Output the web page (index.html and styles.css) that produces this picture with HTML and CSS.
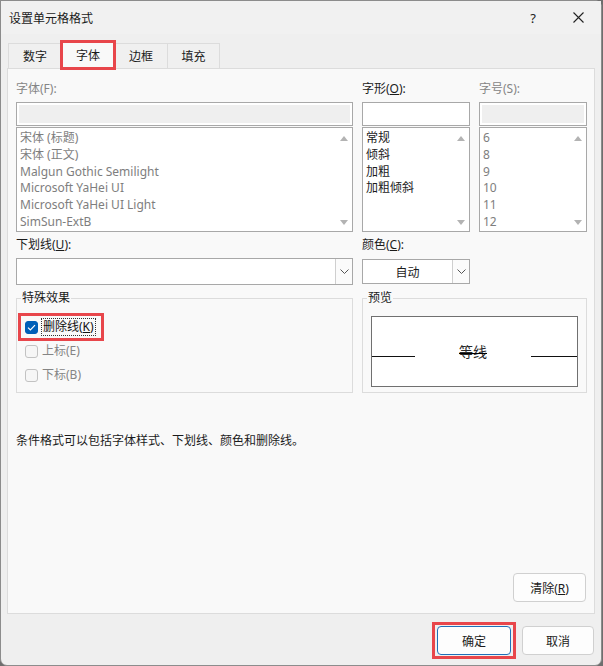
FILE: index.html
```html
<!DOCTYPE html>
<html lang="zh-CN">
<head>
<meta charset="utf-8">
<title>设置单元格格式</title>
<link rel="stylesheet" href="styles.css">
</head>
<body>
<div class="window">
  <div class="titlebar">
    <span class="title">设置单元格格式</span>
    <span class="help">?</span>
    <span class="close"><svg width="11" height="11" viewBox="0 0 11 11"><path d="M0.5 0.5L10.5 10.5M10.5 0.5L0.5 10.5" stroke="#222" stroke-width="1.1" fill="none"/></svg></span>
  </div>
  <div class="tabs">
    <div class="tab first">数字</div>
    <div class="tab active">字体</div>
    <div class="tab">边框</div>
    <div class="tab last">填充</div>
  </div>
  <div class="panel">
    <div class="grid">
      <div class="field">
        <div class="lbl dis">字体(F):</div>
        <div class="inp grayed"></div>
        <div class="list">
          <div class="items dis">
            <div>宋体 (标题)</div>
            <div>宋体 (正文)</div>
            <div>Malgun Gothic Semilight</div>
            <div>Microsoft YaHei UI</div>
            <div>Microsoft YaHei UI Light</div>
            <div>SimSun-ExtB</div>
          </div>
          <div class="sb"><span class="up"></span><span class="down"></span></div>
        </div>
      </div>
      <div class="field">
        <div class="lbl">字形(<u>O</u>):</div>
        <div class="inp"></div>
        <div class="list">
          <div class="items">
            <div>常规</div>
            <div>倾斜</div>
            <div>加粗</div>
            <div>加粗倾斜</div>
          </div>
          <div class="sb"><span class="up"></span><span class="down"></span></div>
        </div>
      </div>
      <div class="field">
        <div class="lbl dis">字号(S):</div>
        <div class="inp grayed"></div>
        <div class="list">
          <div class="items dis">
            <div>6</div>
            <div>8</div>
            <div>9</div>
            <div>10</div>
            <div>11</div>
            <div>12</div>
          </div>
          <div class="sb"><span class="up"></span><span class="down"></span></div>
        </div>
      </div>

      <div class="field">
        <div class="lbl">下划线(<u>U</u>):</div>
        <div class="dd">
          <span class="dd-val"></span>
          <span class="dd-btn"><svg width="9" height="5" viewBox="0 0 9 5"><path d="M0.5 0.5L4.5 4.5L8.5 0.5" stroke="#555" stroke-width="1" fill="none"/></svg></span>
        </div>
      </div>
      <div class="field">
        <div class="lbl">颜色(<u>C</u>):</div>
        <div class="dd small">
          <span class="dd-val center">自动</span>
          <span class="dd-btn"><svg width="9" height="5" viewBox="0 0 9 5"><path d="M0.5 0.5L4.5 4.5L8.5 0.5" stroke="#555" stroke-width="1" fill="none"/></svg></span>
        </div>
      </div>
      <div></div>

      <fieldset class="group effects">
        <legend>特殊效果</legend>
        <div class="row marked">
          <span class="cb on"><svg width="9" height="7" viewBox="0 0 9 7"><path d="M1 3.6L3.4 6L8 1.2" stroke="#fff" stroke-width="1.2" fill="none"/></svg></span>
          <span class="cb-label focus">删除线(<u>K</u>)</span>
        </div>
        <div class="row">
          <span class="cb"></span>
          <span class="cb-label dis">上标(E)</span>
        </div>
        <div class="row">
          <span class="cb"></span>
          <span class="cb-label dis">下标(B)</span>
        </div>
      </fieldset>
      <fieldset class="group preview">
        <legend>预览</legend>
        <div class="pv">
          <span class="pv-line left"></span>
          <span class="pv-text"><span class="strike">等线</span></span>
          <span class="pv-line right"></span>
        </div>
      </fieldset>
    </div>
    <p class="note">条件格式可以包括字体样式、下划线、颜色和删除线。</p>
    <div class="spacer"></div>
    <div class="clear-row"><button class="btn clear">清除(<u>R</u>)</button></div>
  </div>
  <div class="footer">
    <span class="mark"><button class="btn ok">确定</button></span>
    <button class="btn cancel">取消</button>
  </div>
</div>
</body>
</html>
```

FILE: styles.css
```css
* { box-sizing: border-box; }
html, body { margin: 0; padding: 0; }
body {
  width: 603px;
  height: 666px;
  overflow: hidden;
  background: #6e6e6e;
  font-family: "Noto Sans", "Noto Sans CJK SC", sans-serif;
  font-size: 12px;
  color: #1b1b1b;
}
u { text-decoration: underline; text-underline-offset: 1px; }

.window {
  width: 602px;
  height: 666px;
  background: #efefef;
  border: 1px solid #8c8c8c;
  border-radius: 0 7px 7px 7px;
  display: flex;
  flex-direction: column;
}

/* title bar */
.titlebar {
  flex: none;
  height: 33px;
  display: flex;
  align-items: center;
  padding: 0 11px 0 8px;
  background: #f1f1f1;
}
.title { flex: 1; font-size: 12px; color: #1a1a1a; }
.help { width: 20px; text-align: center; font-size: 13px; color: #222; margin-right: 23px; }
.close { width: 24px; display: flex; justify-content: center; align-items: center; }

/* tabs */
.tabs {
  flex: none;
  height: 27px;
  margin-top: 7px;
  padding-left: 7px;
  display: flex;
  align-items: flex-end;
}
.tab {
  height: 25px;
  width: 54px;
  margin-left: -1px;
  border: 1px solid #dcdcdc;
  border-bottom: none;
  background: #f0f0f0;
  display: flex;
  align-items: center;
  justify-content: center;
  font-size: 12px;
  color: #1b1b1b;
}
.tab.first { margin-left: 0; width: 54px; }
.tab.last { width: 53px; }
.tab.active {
  position: relative;
  z-index: 1;
  height: 28px;
  margin-bottom: -1px;
  background: #f9f9f9;
  outline: 3px solid #e8464b;
  outline-offset: -2px;
  padding-bottom: 1px;
}

/* panel */
.panel {
  flex: 1;
  margin: 0 6px;
  background: #f9f9f9;
  border: 1px solid #dcdcdc;
  padding: 12px 6px 11px 8px;
  display: flex;
  flex-direction: column;
}
.grid {
  display: grid;
  grid-template-columns: 337px 108px 108px;
  column-gap: 9px;
  row-gap: 5px;
}
.field { display: flex; flex-direction: column; }
.lbl { height: 16px; line-height: 16px; margin-bottom: 5px; color: #1b1b1b; }
.dis { color: #858585; }

.inp {
  height: 24px;
  border: 1px solid #a8a8a8;
  background: #fff;
}
.inp.grayed {
  background: #efefef;
  box-shadow: inset 0 0 0 2px #fff;
}
.list {
  height: 105px;
  margin-top: 1px;
  border: 1px solid #a8a8a8;
  background: #fff;
  display: flex;
}
.items {
  flex: 1;
  padding: 2px 0 0 3px;
  line-height: 16.8px;
  white-space: nowrap;
}
.items.dis { color: #7e7e7e; }
.sb {
  width: 17px;
  flex: none;
  display: flex;
  flex-direction: column;
  align-items: center;
  justify-content: space-between;
  padding: 8px 0 6px;
}
.up, .down {
  width: 0;
  height: 0;
  border-left: 4.5px solid transparent;
  border-right: 4.5px solid transparent;
}
.up { border-bottom: 5px solid #b3b3b3; }
.down { border-top: 5px solid #b3b3b3; }

/* dropdowns */
.dd {
  height: 27px;
  border: 1px solid #a8a8a8;
  background: #fff;
  display: flex;
}
.dd.small { height: 25px; margin-top: 1px; }
.dd-val { flex: 1; display: flex; align-items: center; }
.dd-val.center { justify-content: center; }
.dd-btn {
  width: 17px;
  flex: none;
  border-left: 1px solid #cfcfcf;
  display: flex;
  align-items: center;
  justify-content: center;
  background: #fbfbfb;
}

/* groups */
.group {
  margin: 0;
  min-width: 0;
  border: 1px solid #dcdcdc;
}
.group legend {
  line-height: 16px;
  padding: 0 1px;
  margin-left: -4px;
  color: #1b1b1b;
}
.effects { padding: 7px 0 5px 1px; }
.effects legend { margin-left: 3px; }
.preview { grid-column: 2 / span 2; padding: 10px 8px 5px 8px; }

.row {
  height: 24px;
  display: flex;
  align-items: center;
  margin-left: 7px;
}
.row.marked {
  margin-left: 0;
  width: 86px;
  height: 28px;
  margin-bottom: -2px;
  border: 3px solid #e8464b;
  padding-left: 4px;
}
.cb {
  width: 13px;
  height: 13px;
  border: 1px solid #c2c2c2;
  border-radius: 3px;
  background: #f6f6f6;
  display: flex;
  align-items: center;
  justify-content: center;
  flex: none;
}
.cb.on { background: #005fb8; border-color: #005fb8; }
.cb-label { margin-left: 3px; line-height: 16px; padding: 0 1px; }
.cb-label.focus { border: 1px dotted #333; color: #111; }

.pv {
  height: 71px;
  border: 1px solid #707070;
  background: #fff;
  display: flex;
  align-items: center;
}
.pv-line { height: 1px; background: #111; margin-top: 9px; flex: none; }
.pv-line.left { width: 43px; }
.pv-line.right { width: 46px; }
.pv-text {
  flex: 1;
  text-align: center;
  font-size: 14px;
  line-height: 20px;
  color: #2a2a2a;
}
.strike {
  position: relative;
  display: inline-block;
  line-height: 20px;
}
.strike::after {
  content: "";
  position: absolute;
  left: 0;
  right: 0;
  top: 11px;
  height: 1px;
  background: #000;
}

.note { margin: 40px 0 0; line-height: 16px; color: #1b1b1b; }
.spacer { flex: 1; }
.clear-row { display: flex; justify-content: flex-end; padding-right: 2px; }

/* buttons */
.btn {
  height: 29px;
  border: 1px solid #d0d0d0;
  border-radius: 4px;
  background: #fdfdfd;
  font-family: "Noto Sans", "Noto Sans CJK SC", sans-serif;
  font-size: 12px;
  color: #1b1b1b;
  padding: 0;
}
.clear { width: 73px; }

.footer {
  flex: none;
  height: 51px;
  display: flex;
  justify-content: flex-end;
  align-items: flex-start;
  gap: 11px;
  padding: 12px 7px 0 0;
}
.mark {
  display: flex;
  border: 3px solid #e8464b;
  padding: 1px 2px;
  margin: -4px -5px;
}
.ok {
  width: 74px;
  border-color: #1f6fb8;
}
.cancel { width: 72px; }
```
